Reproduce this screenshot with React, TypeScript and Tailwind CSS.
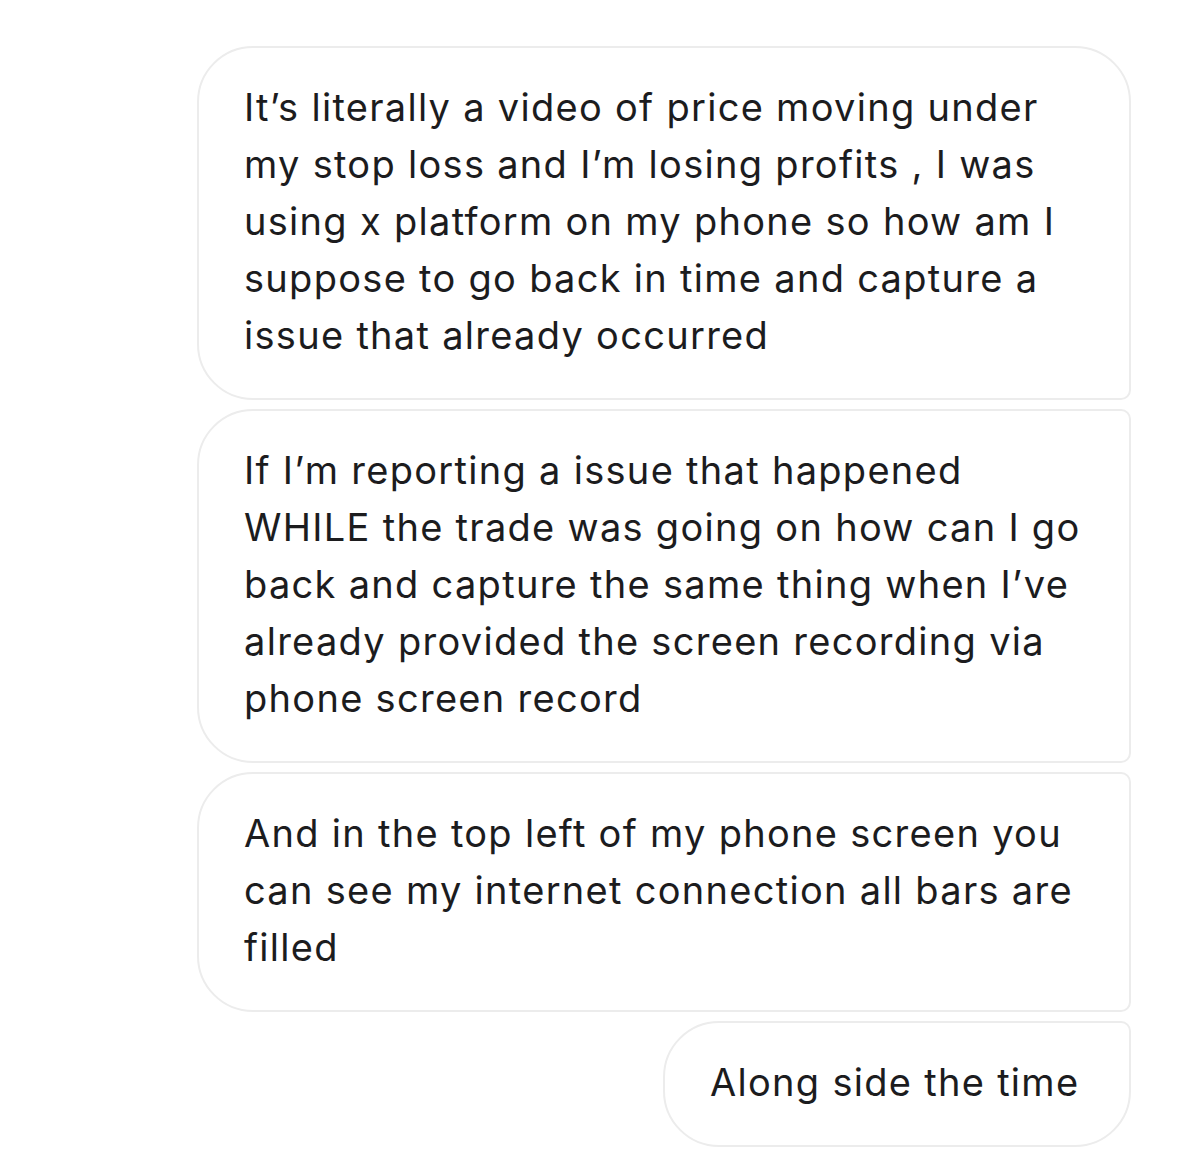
import React from 'react';

interface BubbleProps {
  lines: string[];
  className: string;
}

const Bubble: React.FC<BubbleProps> = ({ lines, className }) => (
  <div className={`bg-white border-2 border-[#ececec] pl-[45px] pr-[40px] pt-[31px] pb-[34px] ${className}`}>
    {lines.map((l, i) => (
      <div key={i} className="whitespace-nowrap">{l}</div>
    ))}
  </div>
);

const App: React.FC = () => {
  return (
    <div
      className="w-[1179px] h-[1165px] bg-white flex flex-col items-end gap-[9px] pt-[46px] pr-[48px] text-[38px] leading-[57px] tracking-[0.034em] text-[#1c1c1e]"
      style={{ fontFamily: 'Inter, "Noto Sans", sans-serif' }}
    >
      <Bubble
        className="w-[934px] rounded-tl-[56px] rounded-tr-[56px] rounded-bl-[56px] rounded-br-[10px]"
        lines={[
          'It’s literally a video of price moving under',
          'my stop loss and I’m losing profits , I was',
          'using x platform on my phone so how am I',
          'suppose to go back in time and capture a',
          'issue that already occurred',
        ]}
      />
      <Bubble
        className="w-[934px] rounded-tl-[56px] rounded-bl-[56px] rounded-tr-[10px] rounded-br-[10px]"
        lines={[
          'If I’m reporting a issue that happened',
          'WHILE the trade was going on how can I go',
          'back and capture the same thing when I’ve',
          'already provided the screen recording via',
          'phone screen record',
        ]}
      />
      <Bubble
        className="w-[934px] rounded-tl-[56px] rounded-bl-[56px] rounded-tr-[10px] rounded-br-[10px]"
        lines={[
          'And in the top left of my phone screen you',
          'can see my internet connection all bars are',
          'filled',
        ]}
      />
      <Bubble
        className="w-[468px] rounded-tl-[56px] rounded-bl-[56px] rounded-tr-[10px] rounded-br-[56px]"
        lines={['Along side the time']}
      />
    </div>
  );
};

export default App;
